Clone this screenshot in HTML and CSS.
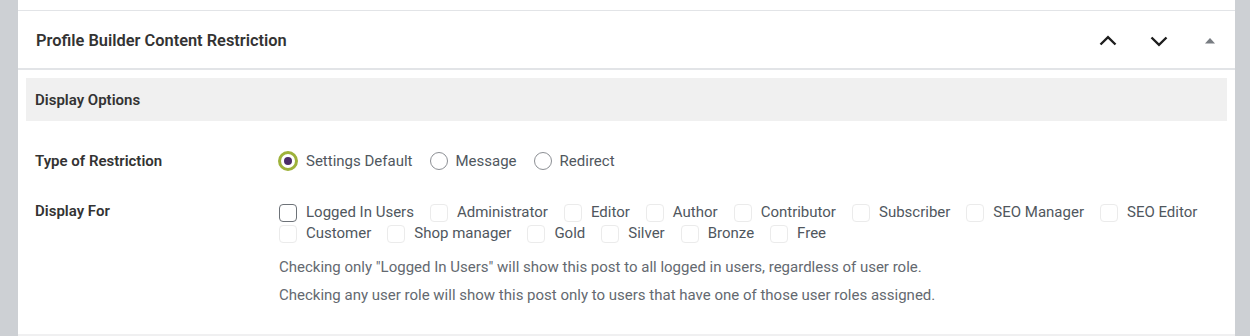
FILE: index.html
```html
<!DOCTYPE html>
<html lang="en">
<head>
    <meta charset="UTF-8">
    <title>Profile Builder Content Restriction</title>
    <link rel="stylesheet" href="styles.css">
</head>
<body>

    <div class="panel">
        <div class="prev-box"></div>

        <!-- Metabox header -->
        <div class="box-header">
            <h2>Profile Builder Content Restriction</h2>
            <div class="box-actions">
                <button class="icon-btn" aria-label="Move up">
                    <svg width="24" height="24" viewBox="0 0 24 24"><path d="M4.5 15.5 12 8.2l7.5 7.3" fill="none" stroke="#1e1e1e" stroke-width="2.4"/></svg>
                </button>
                <button class="icon-btn" aria-label="Move down">
                    <svg width="24" height="24" viewBox="0 0 24 24"><path d="M19.5 8.5 12 15.8 4.5 8.5" fill="none" stroke="#1e1e1e" stroke-width="2.4"/></svg>
                </button>
                <button class="icon-btn" aria-label="Toggle panel">
                    <svg width="24" height="24" viewBox="0 0 24 24"><path d="M7 14.5h10L12 9z" fill="#787c82"/></svg>
                </button>
            </div>
        </div>

        <div class="box-inside">
            <div class="section-title">Display Options</div>

            <div class="field-row first">
                <div class="field-label">Type of Restriction</div>
                <div class="field-body">
                    <div class="options radios">
                        <label class="opt"><span class="radio checked"></span>Settings Default</label>
                        <label class="opt"><span class="radio"></span>Message</label>
                        <label class="opt"><span class="radio"></span>Redirect</label>
                    </div>
                </div>
            </div>

            <div class="field-row">
                <div class="field-label">Display For</div>
                <div class="field-body">
                    <div class="options checks">
                        <label class="opt"><span class="check dark"></span>Logged In Users</label>
                        <label class="opt"><span class="check"></span>Administrator</label>
                        <label class="opt"><span class="check"></span>Editor</label>
                        <label class="opt"><span class="check"></span>Author</label>
                        <label class="opt"><span class="check"></span>Contributor</label>
                        <label class="opt"><span class="check"></span>Subscriber</label>
                        <label class="opt"><span class="check"></span>SEO Manager</label>
                        <label class="opt"><span class="check"></span>SEO Editor</label>
                        <label class="opt"><span class="check"></span>Customer</label>
                        <label class="opt"><span class="check"></span>Shop manager</label>
                        <label class="opt"><span class="check"></span>Gold</label>
                        <label class="opt"><span class="check"></span>Silver</label>
                        <label class="opt"><span class="check"></span>Bronze</label>
                        <label class="opt"><span class="check"></span>Free</label>
                    </div>
                    <p class="description">Checking only "Logged In Users" will show this post to all logged in users, regardless of user role.</p>
                    <p class="description">Checking any user role will show this post only to users that have one of those user roles assigned.</p>
                </div>
            </div>
        </div>
    </div>

</body>
</html>
```

FILE: styles.css
```css
/* Global */
body {
    margin: 0;
    background: #cdd0d4;
    font-family: Roboto, "Noto Sans", sans-serif;
    font-size: 15px;
    color: #3c434a;
}

.panel {
    margin: 0 15px 0 18px;
    background: #fff;
    height: 336px;
    box-sizing: border-box;
    border-bottom: 2px solid #f0f0f1;
}
.prev-box { height: 10px; border-bottom: 1px solid #e2e4e7; }

/* Header */
.box-header {
    display: flex;
    align-items: center;
    justify-content: space-between;
    height: 57px;
    padding-left: 18px;
    border-bottom: 2px solid #e2e4e7;
}
.box-header h2 {
    margin: 1px 0 0;
    font-size: 16.4px;
    font-weight: 600;
    color: #333;
}
.box-actions { display: flex; align-items: center; margin-top: 2px; }
.icon-btn {
    width: 51px;
    height: 40px;
    padding: 0;
    border: none;
    background: none;
    display: flex;
    align-items: center;
    justify-content: center;
}

/* Inside */
.box-inside { padding: 8px 8px 0; }
.section-title {
    background: #f0f0f0;
    height: 43px;
    line-height: 44px;
    padding-left: 9px;
    font-weight: 600;
    color: #333;
}

.field-row { display: flex; margin-top: 30px; }
.field-row.first { margin-top: 30px; }
.field-label {
    width: 243px;
    flex-shrink: 0;
    padding-left: 9px;
    font-weight: 600;
    color: #333;
    line-height: 20px;
}
.field-body { flex: 1; padding-right: 10px; }

.options { display: flex; flex-wrap: wrap; column-gap: 16px; line-height: 20px; }
.radios { column-gap: 17px; }
.checks { line-height: 21px; margin-top: 1px; padding-left: 1px; }
.opt { display: flex; align-items: center; gap: 8px; color: #50575e; }
.checks .opt { gap: 9px; }

.radio {
    width: 18px;
    height: 18px;
    border: 1px solid #8c8f94;
    border-radius: 50%;
    box-sizing: border-box;
    position: relative;
}
.radio.checked { width: 20px; height: 20px; border: 3px solid #9eb23b; }
.radio.checked::after {
    content: "";
    position: absolute;
    left: 3px;
    top: 3px;
    width: 8px;
    height: 8px;
    border-radius: 50%;
    background: #4b2c69;
}

.check {
    width: 18px;
    height: 18px;
    border: 1px solid #ebebeb;
    border-radius: 4px;
    box-sizing: border-box;
}
.check.dark { border: 1.5px solid #6d7278; }

.description {
    margin: 13px 0 0 1px;
    line-height: 20px;
    color: #646970;
}
.description + .description { margin-top: 8px; }
```
